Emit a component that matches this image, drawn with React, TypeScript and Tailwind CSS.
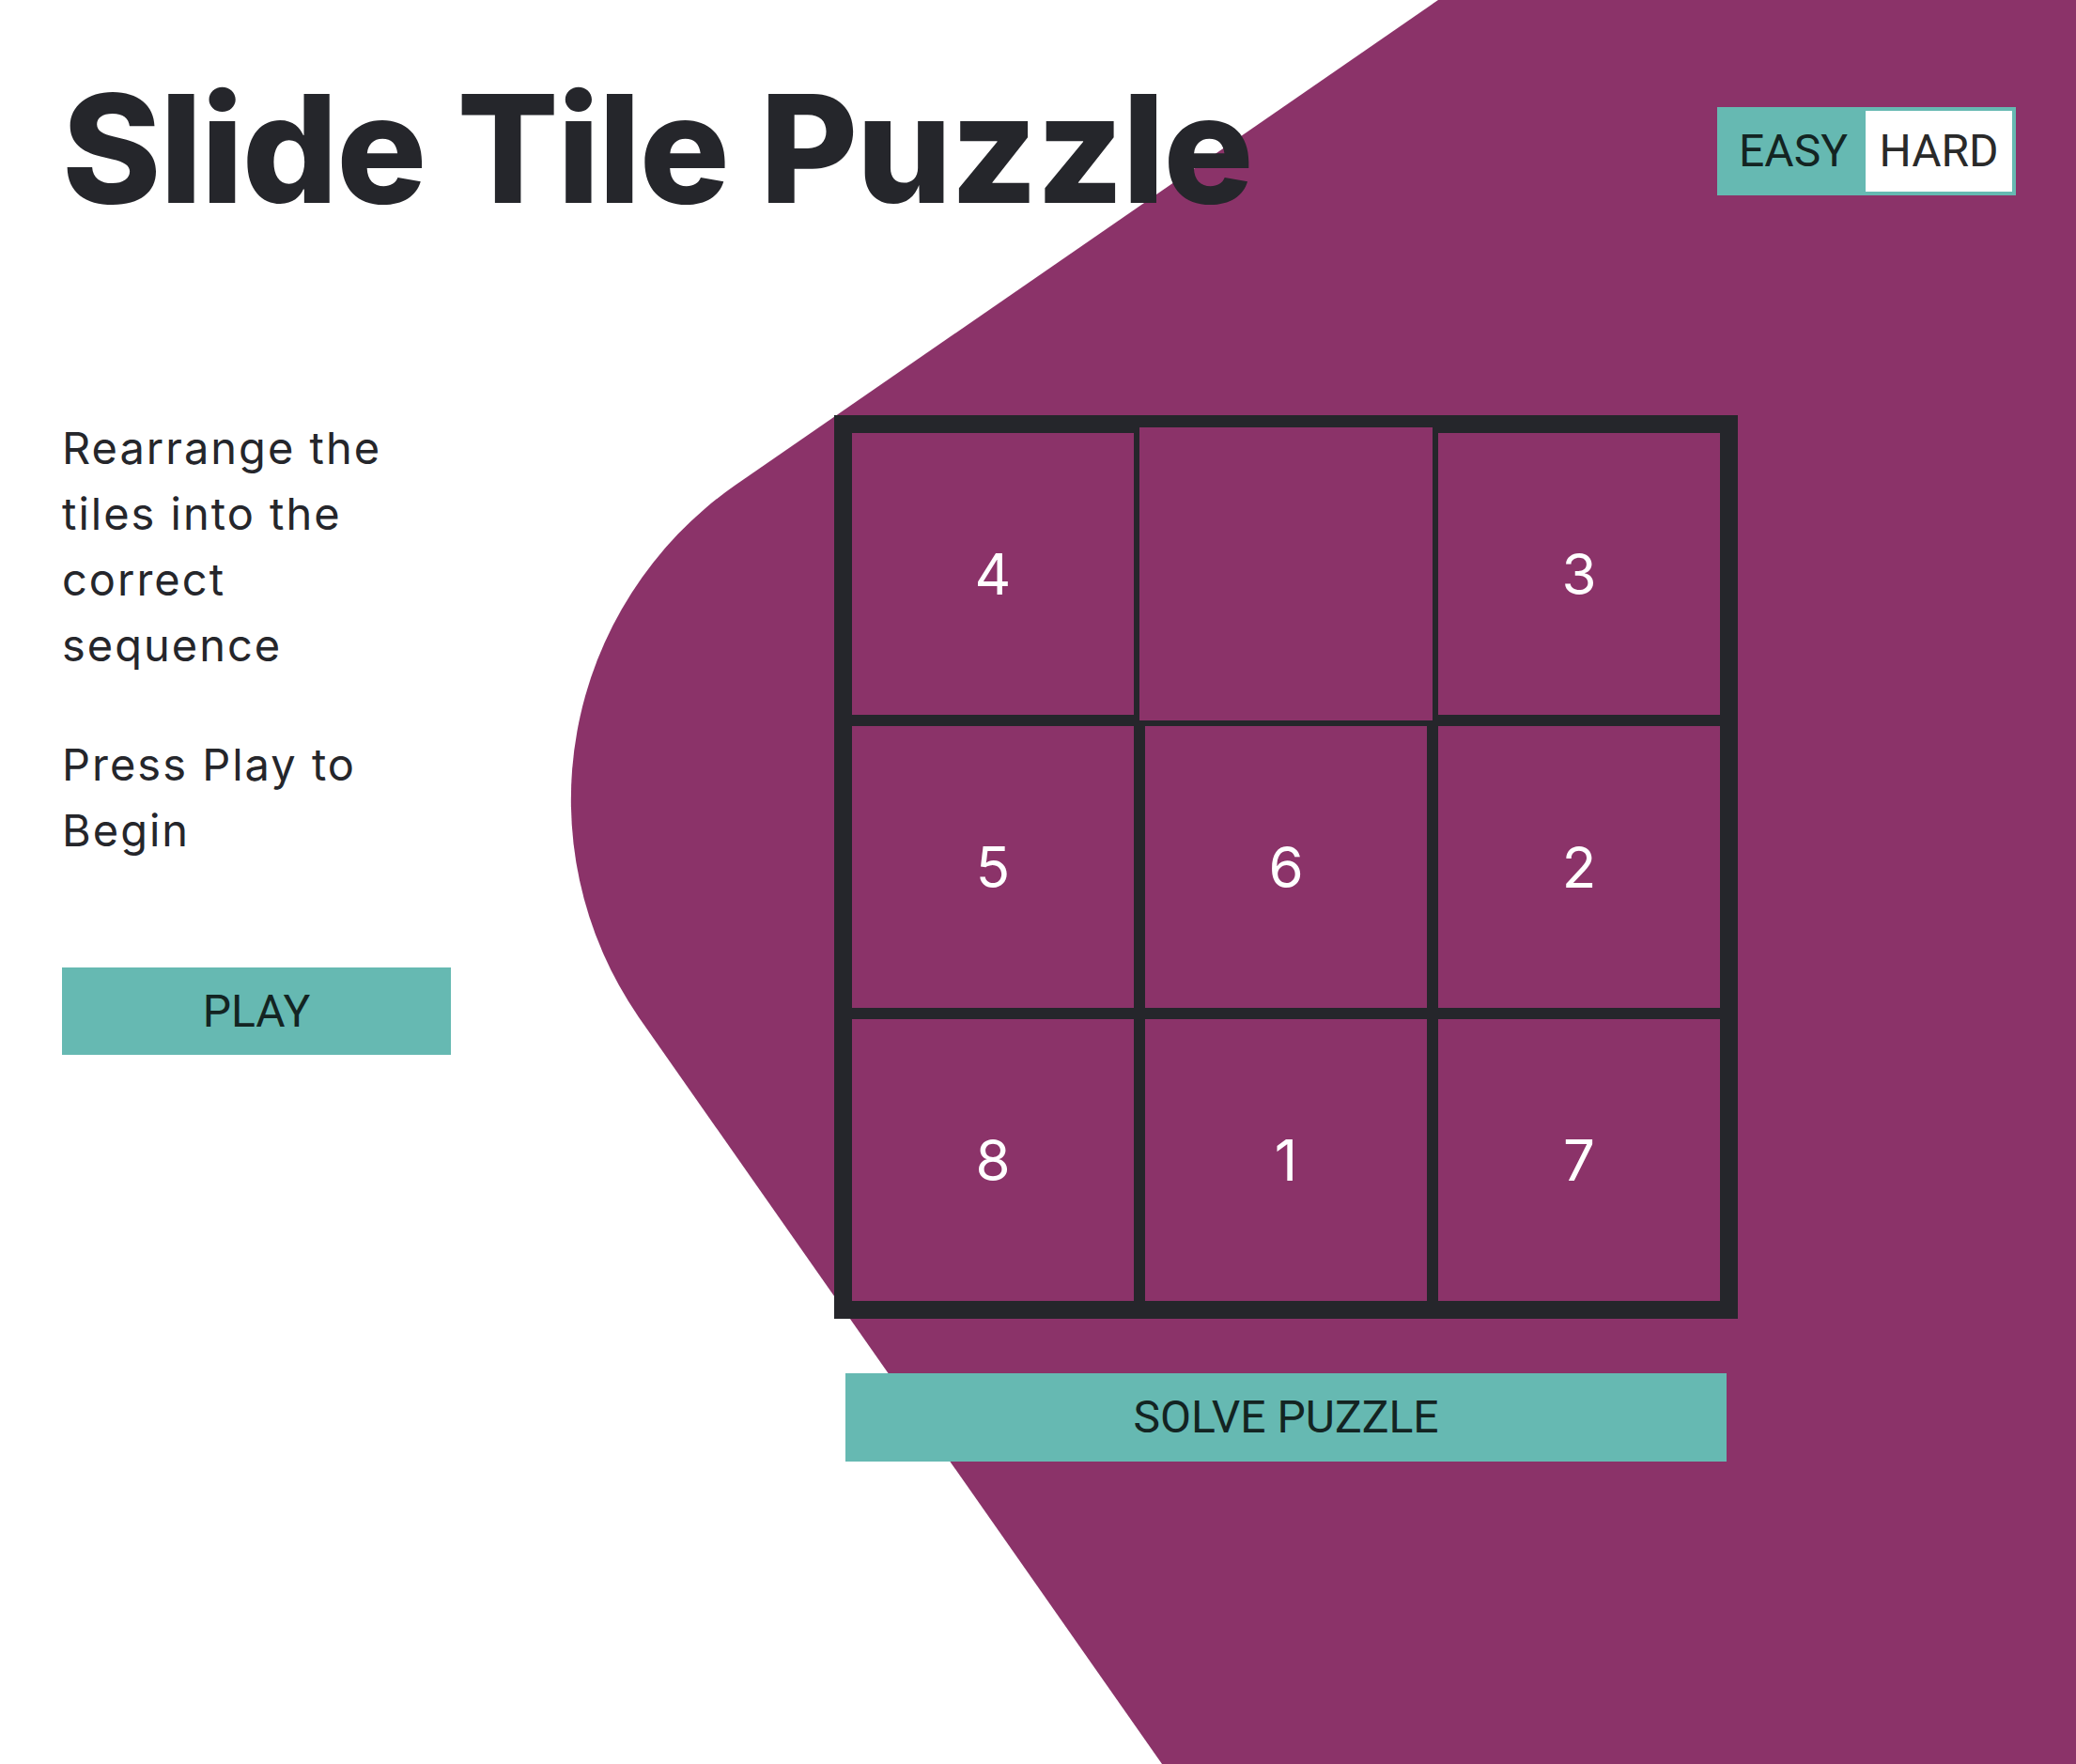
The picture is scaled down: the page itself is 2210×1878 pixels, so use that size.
const tiles = [4, 0, 3, 5, 6, 2, 8, 1, 7];

export default function App() {
  return (
    <div className="relative min-h-[1878px] w-full overflow-hidden bg-white font-['Inter',sans-serif] text-[#25262b]">
      {/* background blob */}
      <svg className="absolute inset-0 h-full w-full" viewBox="0 0 2210 1878" preserveAspectRatio="none">
        <path d="M1531 0 L782 517 A408 408 0 0 0 680 1083 L1237 1878 L2210 1878 L2210 0 Z" fill="#8b3369" />
      </svg>

      <div className="relative pl-[66px] pr-16">
        <header className="flex items-start justify-between pt-[78px]">
          <h1 className="text-[160px] font-extrabold leading-none tracking-[-1.5px]">Slide Tile Puzzle</h1>
          <div className="mt-[36px] flex border-4 border-[#66b9b2] font-['Roboto',sans-serif] text-[48px]">
            <button className="h-[86px] w-[154px] bg-[#66b9b2] text-[#132422]">EASY</button>
            <button className="h-[86px] w-[156px] bg-white text-[#2a2a2a]">HARD</button>
          </div>
        </header>

        <main className="mt-[204px] flex items-start">
          <div className="w-[414px]">
            <p className="w-[400px] text-[47px] leading-[70px] tracking-[2px]">
              Rearrange the tiles into the correct sequence
            </p>
            <p className="mt-[57px] w-[400px] text-[47px] leading-[70px] tracking-[2px]">Press Play to Begin</p>
            <button className="mt-[111px] h-[93px] w-full bg-[#66b9b2] font-['Roboto',sans-serif] text-[48px] text-[#132422]">
              PLAY
            </button>
          </div>

          <div className="ml-[408px] w-[962px]">
            <div className="grid grid-cols-3 border-[13px] border-[#25262b] bg-[#8b3369]">
              {tiles.map((n, idx) =>
                n === 0 ? (
                  <div key={idx} className="h-[312px]" />
                ) : (
                  <div
                    key={idx}
                    className="flex h-[312px] items-center justify-center border-[6px] border-[#25262b] text-[60px] text-white"
                  >
                    {n}
                  </div>
                )
              )}
            </div>
            <button className="mx-[12px] mt-[58px] h-[94px] w-[938px] bg-[#66b9b2] font-['Roboto',sans-serif] text-[48px] text-[#132422]">
              SOLVE PUZZLE
            </button>
          </div>
        </main>
      </div>
    </div>
  );
}
